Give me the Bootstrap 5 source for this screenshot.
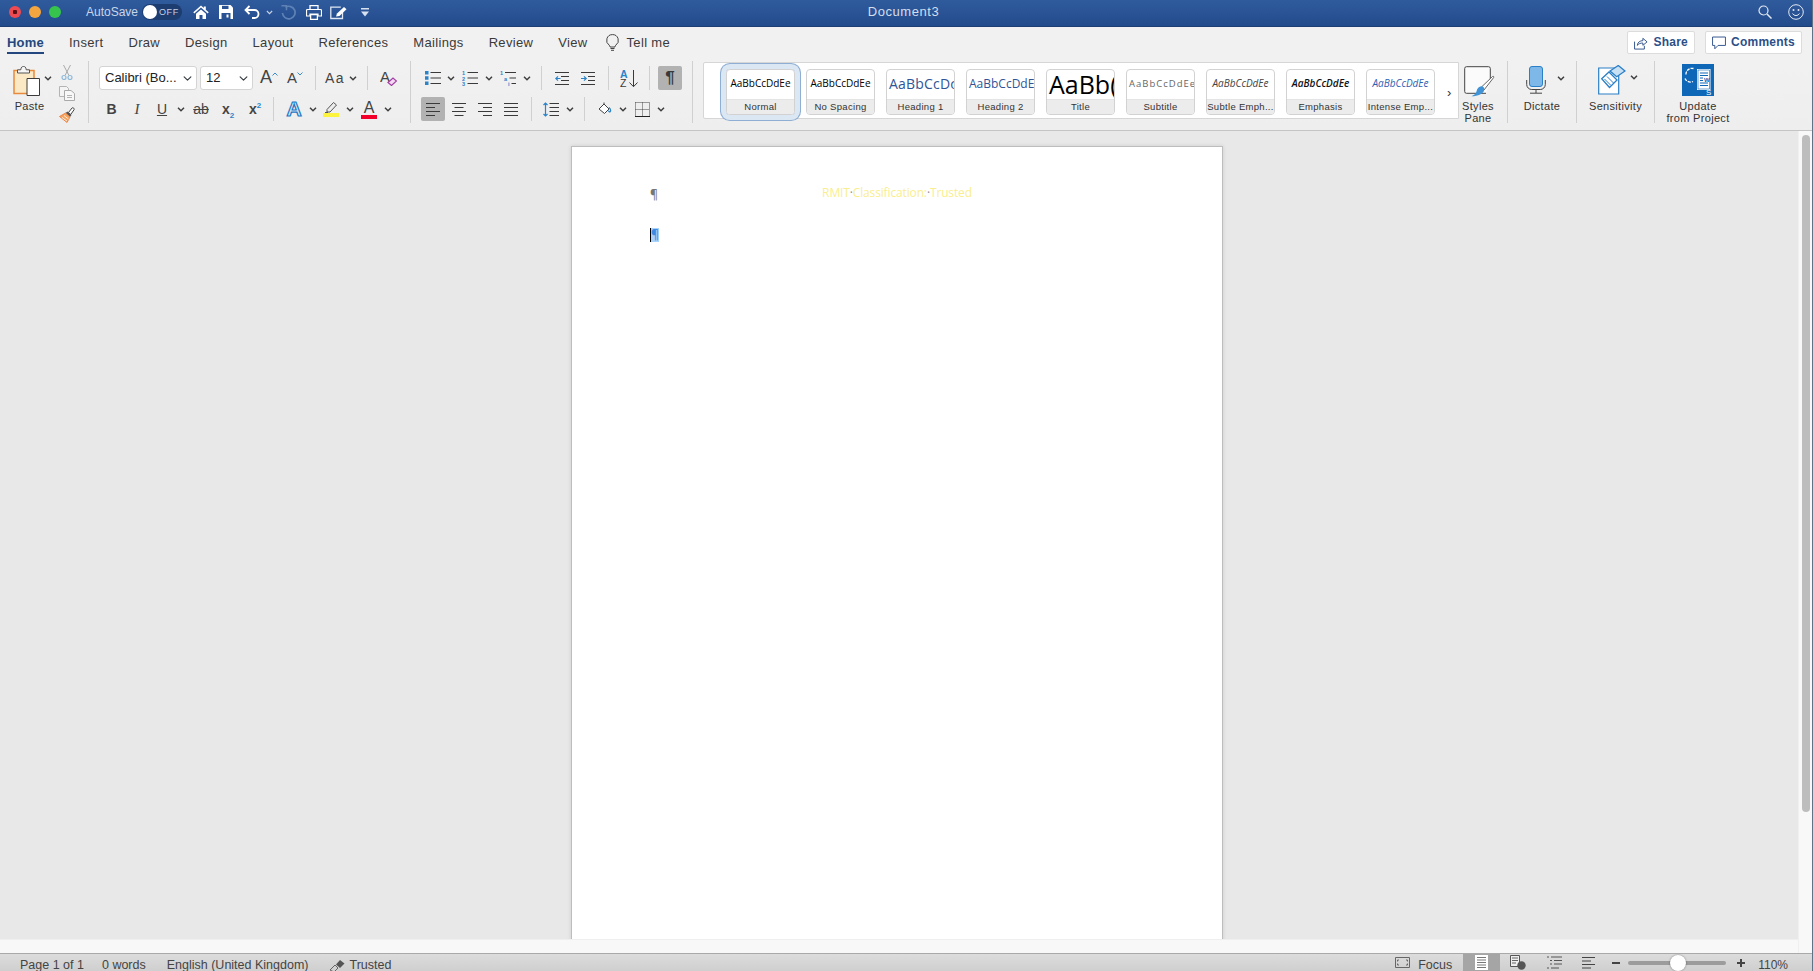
<!DOCTYPE html>
<html lang="en">
<head>
<meta charset="UTF-8">
<meta name="viewport" content="width=device-width, initial-scale=1.0">
<title>Document3</title>
<link href="https://cdn.jsdelivr.net/npm/bootstrap@5.3.0/dist/css/bootstrap.min.css" rel="stylesheet">
<style>
html, body { height: 100%; }
body { width: 1813px; height: 971px; overflow: hidden; background: #f1f1f1; color: #333; font-family: "Liberation Sans", Arial, sans-serif; font-size: 13px; display: flex; flex-direction: column; border-right: 1px solid #5d7386; }
svg { display: block; flex: none; }

.cell { display: flex; align-items: center; justify-content: center; flex: none; height: 24px; }
.c7 { width: 7px; } .c8 { width: 8px; } .c10 { width: 10px; } .c12 { width: 12px; } .c14 { width: 14px; }
.c16 { width: 16px; } .c18 { width: 18px; } .c22 { width: 22px; } .c23 { width: 23px; } .c24 { width: 24px; }
.c26 { width: 26px; } .c28 { width: 28px; } .c30 { width: 30px; } .c32 { width: 32px; }
.vsep { width: 1px; height: 24px; background: #d0d0d0; }

/* title bar */
.titlebar { height: 27px; flex: none; background: linear-gradient(#2f5b9d, #234b8c); border-bottom: 1px solid #1d3e75; color: #d5deec; padding: 0 0 2px 9px; }
.light { width: 12px; height: 12px; border-radius: 50%; margin-right: 8px; flex: none; }
.light-red { background: radial-gradient(circle, #5a1015 0 2px, #ee4a52 2.5px); }
.light-orange { background: #f6a63e; }
.light-green { background: #36c44d; margin-right: 0; }
.autosave { width: 56px; margin-left: 25px; font-size: 12px; color: #c9d5e8; }
.toggle { width: 40px; height: 16px; border-radius: 8px; background: #1d3c70; color: #c6d2e6; font-size: 9px; letter-spacing: .6px; padding: 0 0 0 17px; line-height: 16px; margin-right: 7px; position: relative; flex: none; }
.toggle::before { content: ""; position: absolute; left: 1px; top: 1px; width: 14px; height: 14px; background: #fff; border-radius: 50%; }
.doctitle { position: absolute; left: 0; right: 5px; top: 0; line-height: 24px; text-align: center; letter-spacing: .55px; color: #d5deec; pointer-events: none; }

/* tabs */
.tabrow { height: 34px; flex: none; background: #f1f1f1; padding-left: 7px; padding-right: 10px; }
.tabrow .nav-link { color: #3a3a3a; padding: 8px 0 1px; margin-right: 25px; font-size: 13px; letter-spacing: .33px; line-height: 16px; border-bottom: 2.5px solid transparent; }
.tabrow .nav-link.active { font-weight: 700; color: #24477f; border-bottom-color: #24477f; letter-spacing: .2px; }
.tellme { margin-left: -7px; }
.tellme .nav-link { padding-top: 7px; padding-bottom: 1px; }
.tb-btns { gap: 10px; padding-top: 4px; }
.tb-btn.btn { height: 23px; padding: 0 6px; font-size: 12px; line-height: 21px; font-weight: 700; letter-spacing: .25px; color: #2c4f88; background: #fff; border: 1px solid #dcdcdc; border-radius: 2px; display: flex; align-items: center; gap: 5px; }

/* ribbon */
.ribbon { height: 70px; flex: none; border-bottom: 1px solid #c4c4c4; background: linear-gradient(#f1f1f1, #eeeeee); }
.rgroup { height: 62px; flex: none; border-right: 1px solid #d0d0d0; }
.rlabel { font-size: 11px; line-height: 12px; letter-spacing: .32px; color: #333; text-align: center; white-space: nowrap; }
.rrow { display: flex; align-items: center; height: 24px; }
.rrow + .rrow { margin-top: 7px; }
.rrows { padding-top: 5px; }
.grp-paste { width: 89px; display: flex; }
.paste-col { width: 59px; }
.paste-top { height: 39px; display: flex; align-items: flex-start; padding: 5px 0 0 13px; }
.paste-tools { display: flex; flex-direction: column; padding-top: 4px; }
.paste-tools svg + svg { margin-top: 6px; }
.grp-font { width: 322px; }
.grp-para { width: 282px; }
.pad-font1 { padding-left: 10px; }
.pad-font2 { padding-left: 11px; }
.pad-para { padding-left: 10px; }
.fsel.form-select { height: 24px; font-size: 13px; padding: 0 16px 0 5px; line-height: 22px; border: 1px solid #d4d4d4; border-radius: 3px; color: #222; background-position: right 3px center; background-size: 11px 9px; box-shadow: none; flex: none; }
.fsel-name { width: 98px; margin-right: 3px; }
.fsel-size { width: 53px; margin-right: 3px; }
.gly { color: #444; line-height: 1.2; }
.gly-a { font-size: 18px; font-weight: 400; }
.gly-a2 { font-size: 15px; }
.gly-aa { font-size: 14px; letter-spacing: 1.5px; }
.gly-b { font-size: 14px; font-weight: 700; }
.gly-i { font-size: 15px; font-style: italic; font-family: "Liberation Serif", serif; }
.gly-u { font-size: 14px; text-decoration: underline; }
.gly-s { font-size: 14px; text-decoration: line-through; }
.gly-x { font-size: 14px; font-weight: 700; }
.gly-x small { font-size: 8px; color: #2e86c9; font-weight: 700; }
.sub2 { position: relative; top: 4px; }
.sup2 { position: relative; top: -6px; }
.gly-fx { font-size: 21px; font-weight: 700; color: #d9ecfb; -webkit-text-stroke: 1.2px #1f78c4; }
.colorpick { display: flex; flex-direction: column; align-items: center; width: 16px; }
.colorpick span { font-size: 16px; line-height: 15px; color: #444; }
.colorbar { width: 16px; height: 4px; }
.bar-red { background: #f3002a; }
.bar-yellow { background: #fbf33d; }
.onbtn { width: 24px; height: 24px; border-radius: 2px; background: #b2b2b2; display: flex; align-items: center; justify-content: center; font-size: 17px; font-weight: 700; color: #3a3a3a; }

.gallery { width: 756px; height: 57px; margin: 1px 0 0 10px; background: #fff; border: 1px solid #d6d6d6; border-radius: 2px 0 0 2px; padding: 6px 0 0 22px; gap: 11px; flex: none; }
.stylecard.card { width: 69px; height: 46px; flex: none; border: 1px solid #d2d2d2; border-radius: 4px; overflow: hidden; background: linear-gradient(#fff 60%, #f8f8f8); --bs-card-bg: transparent; }
.stylecard.picked { box-shadow: 0 0 0 5px #dce7f4, 0 0 0 6px #8eaed4; }
.prev { height: 29px; line-height: 27px; text-align: center; white-space: nowrap; overflow: hidden; font-family: "Open Sans", sans-serif; font-size: 10px; color: #000; padding: 0 3px; }
.capt { height: 15px; line-height: 14px; font-size: 9.5px; letter-spacing: .3px; text-align: center; background: #ececec; border-top: 1px solid #e4e4e4; color: #333; white-space: nowrap; }
.p-h1 { font-size: 14px; color: #2f5597; text-align: left; letter-spacing: .2px; padding-left: 2px; }
.p-h2 { font-size: 12px; color: #2f5597; text-align: left; padding-left: 2px; }
.p-title { font-size: 25px; color: #000; text-align: left; padding-left: 2px; line-height: 29px; }
.p-sub { font-size: 9.5px; color: #666; letter-spacing: 1px; text-align: left; padding-left: 2px; }
.p-se { font-style: italic; color: #444; }
.p-em { font-style: italic; color: #111; font-weight: 600; }
.p-ie { font-style: italic; color: #2f5fb3; }
.gal-more { width: 10px; padding-top: 14px; padding-left: 1px; font-size: 13px; color: #333; flex: none; line-height: 20px; }

.bigtool { flex: none; }
.big-top { height: 39px; display: flex; align-items: flex-start; padding-top: 4px; }
.grp-styles { width: 49px; padding-right: 10px; }
.grp-styles .big-top { padding-left: 5px; padding-top: 5px; }
.grp-dict { width: 69px; }
.grp-dict .big-top { padding-left: 18px; padding-top: 5px; }
.grp-sens { width: 78px; }
.grp-sens .big-top { padding-left: 21px; padding-top: 4px; }
.grp-upd { width: 86px; border-right: 0; }
.grp-upd .big-top { justify-content: center; padding-top: 3px; }
.big-chev { margin-top: 10px; }
.grp-dict .big-chev { margin-left: 11px; }
.grp-sens .big-chev { margin-left: 4px; }

/* document */
.docrow { flex: 1 1 auto; min-height: 0; display: flex; }
.docleft { width: 1798px; display: flex; flex-direction: column; flex: none; }
.docarea { flex: 1 1 auto; min-height: 0; background: #e8e8e8; overflow: hidden; padding: 15px 0 0 571px; }
.htrack { height: 14px; flex: none; background: #f8f8f8; border-top: 1px solid #efefef; }
.vtrack { width: 14px; flex: none; background: #f8f8f8; padding: 4px 0 0 3px; border-left: 1px solid #f0f0f0; }
.vthumb { width: 8px; height: 677px; background: #bdbdbd; border-radius: 4px; }
.sheet { width: 652px; height: 900px; background: #fff; border: 1px solid #bdbdbd; box-shadow: 0 0 4px rgba(0,0,0,.12); padding: 38px 78px 0; }
.sheet-line { display: grid; grid-template-columns: 1fr auto 1fr; height: 16px; line-height: 16px; }
.sheet-line + .sheet-line { margin-top: 26px; }
.pil { font-family: "Open Sans", sans-serif; font-size: 12px; color: #777; font-weight: 600; justify-self: start; padding-top: 2px; }
.pil-sel { background: #a9d3fb; color: #3c8be0; height: 14px; line-height: 14px; padding-top: 0; margin-top: 1px; border-left: 1px solid #000; }
.hdrtext { font-family: "Open Sans", sans-serif; font-size: 12px; color: #f9ee8f; white-space: nowrap; letter-spacing: -.14px; }
.hdrtext i { font-style: normal; color: #8f8f8f; }

/* status bar */
.statusbar { height: 18px; flex: none; background: linear-gradient(#dcdcdc, #cfcfcf); border-top: 1px solid #a9a9a9; color: #444; font-size: 12.5px; line-height: 22px; overflow: hidden; padding-left: 20px; }
.statusbar span { white-space: nowrap; }
.st-g18 { margin-left: 18px; }
.st-g21 { margin-left: 21px; }
.st-shield { margin-right: 3px; margin-top: 4px; }
.st-cell { height: 17px; display: flex; align-items: center; justify-content: center; flex: none; }
.st-on { width: 37px; background: #a5a5a5; margin-left: 11px; }
.w36 { width: 36px; } .w32 { width: 32px; } .w24 { width: 24px; } .w29 { width: 29px; }
.st-zoom { font-size: 12px; margin-left: 3px; }
.zoomtrack { width: 98px; height: 4px; background: #9c9c9c; border-radius: 2px; position: relative; flex: none; }
.zoomknob { position: absolute; left: 42px; top: -6px; width: 16px; height: 16px; background: #fff; border-radius: 50%; box-shadow: 0 0 2px rgba(0,0,0,.45); }
</style>
</head>
<body>

<svg width="0" height="0" class="position-absolute">
  <symbol id="chev" viewBox="0 0 8 5"><path d="M1 .8 4 3.800 7 .8" fill="none" stroke="#3f3f3f" stroke-width="1.500"/></symbol>
  <symbol id="al-left" viewBox="0 0 14 14"><path d="M0 1.500h14M0 5.500h9M0 9.500h14M0 13.500h9" stroke="#3a3a3a" fill="none"/></symbol>
  <symbol id="al-center" viewBox="0 0 14 14"><path d="M0 1.500h14M2.500 5.500h9M0 9.500h14M2.500 13.500h9" stroke="#3a3a3a" fill="none"/></symbol>
  <symbol id="al-right" viewBox="0 0 14 14"><path d="M0 1.500h14M5 5.500h9M0 9.500h14M5 13.500h9" stroke="#3a3a3a" fill="none"/></symbol>
  <symbol id="al-just" viewBox="0 0 14 14"><path d="M0 1.500h14M0 5.500h14M0 9.500h14M0 13.500h14" stroke="#3a3a3a" fill="none"/></symbol>
</svg>

<header class="titlebar d-flex align-items-center position-relative">
  <div class="doctitle">Document3</div>
  <span class="light light-red"></span><span class="light light-orange"></span><span class="light light-green"></span>
  <span class="autosave">AutoSave</span>
  <span class="toggle">OFF</span>
  <span class="cell c24"><svg width="16" height="14" viewBox="0 0 16 14"><path d="M8 .5 .3 7.300l1 1.100L8 2.600l6.700 5.800 1-1.100L12.800 4.800V1.500h-2v1.600z" fill="#fff"/><path d="M3 8.800 8 4.400l5 4.400V14H9.500V10h-3v4H3z" fill="#fff"/></svg></span>
  <span class="cell c26"><svg width="14" height="14" viewBox="0 0 14 14"><path d="M0 0h11.500L14 2.500V14H0z" fill="#fff"/><path d="M3 .8h6.500v3.200H3z" fill="#2a5292"/><path d="M2.500 8h9v6h-9z" fill="#2a5292"/><path d="M7.500 9.500h2v3h-2z" fill="#fff"/></svg></span>
  <span class="cell c26"><svg width="16" height="14" viewBox="0 0 16 14"><path d="M5.500 1 1.500 5 5.500 9M2 5h8.500a4 4 0 0 1 0 8H8" fill="none" stroke="#fff" stroke-width="1.800"/></svg></span>
  <span class="cell c8"><svg width="7" height="5" viewBox="0 0 8 5"><path d="M1 .8 4 3.800 7 .8" fill="none" stroke="#c6d2e6" stroke-width="1.300"/></svg></span>
  <span class="cell c30"><svg width="16" height="15" viewBox="0 0 16 15"><path d="M5.500 2.200A6.300 6.300 0 1 1 2.500 8" fill="none" stroke="#5f82b5" stroke-width="1.700"/><path d="M1.500 .8h5v4.500" fill="none" stroke="#5f82b5" stroke-width="1.500"/></svg></span>
  <span class="cell c22"><svg width="16" height="15" viewBox="0 0 16 15"><path d="M4 5V.7h8V5" fill="none" stroke="#fff" stroke-width="1.300"/><path d="M1.500 4.500h13a1 1 0 0 1 1 1V11H12V9H4v2H.5V5.500a1 1 0 0 1 1-1z" fill="none" stroke="#fff" stroke-width="1.200"/><path d="M4.600 9.700h6.800v4.600H4.600z" fill="none" stroke="#fff" stroke-width="1.300"/></svg></span>
  <span class="cell c28"><svg width="18" height="15" viewBox="0 0 18 15"><path d="M12.500 6v7.500H.8V2.200h10" fill="none" stroke="#dfe7f2" stroke-width="1.300"/><path d="M4 9.500 5 6.500 12 0l2.500 2.300L7.500 9z" fill="#fff" transform="translate(2 2)"/></svg></span>
  <span class="cell c24"><svg width="8" height="9" viewBox="0 0 8 9"><path d="M0 0h8v1.500H0zM0 3.500h8L4 8.500z" fill="#d8e1ef"/></svg></span>
  <div class="ms-auto d-flex align-items-center gap-3 pe-2">
    <svg width="14" height="14" viewBox="0 0 14 14"><circle cx="5.500" cy="5.500" r="4.500" fill="none" stroke="#e3e9f3" stroke-width="1.200"/><path d="M9 9l4.500 4.500" stroke="#e3e9f3" stroke-width="1.500"/></svg>
    <svg width="16" height="16" viewBox="0 0 16 16"><circle cx="8" cy="8" r="7.300" fill="none" stroke="#e3e9f3"/><circle cx="5.500" cy="6" r="1" fill="#e3e9f3"/><circle cx="10.500" cy="6" r="1" fill="#e3e9f3"/><path d="M4.500 9.500a4 4 0 0 0 7 0" fill="none" stroke="#e3e9f3"/></svg>
  </div>
</header>

<div class="tabrow d-flex align-items-start">
  <ul class="nav flex-nowrap">
    <li class="nav-item"><a class="nav-link active" href="#">Home</a></li>
    <li class="nav-item"><a class="nav-link" href="#">Insert</a></li>
    <li class="nav-item"><a class="nav-link" href="#">Draw</a></li>
    <li class="nav-item"><a class="nav-link" href="#">Design</a></li>
    <li class="nav-item"><a class="nav-link" href="#">Layout</a></li>
    <li class="nav-item"><a class="nav-link" href="#">References</a></li>
    <li class="nav-item"><a class="nav-link" href="#">Mailings</a></li>
    <li class="nav-item"><a class="nav-link" href="#">Review</a></li>
    <li class="nav-item"><a class="nav-link" href="#">View</a></li>
    <li class="nav-item tellme">
      <a class="nav-link d-flex align-items-center gap-2" href="#">
        <svg width="13" height="17" viewBox="0 0 13 17"><path d="M6.500.6a5.800 5.800 0 0 0-3.300 10.600c.7.600.8 1.200.8 1.800h5c0-.6.100-1.200.8-1.800A5.800 5.800 0 0 0 6.500.6z" fill="none" stroke="#444"/><path d="M4.500 14.500h4M5 16.300h3" stroke="#444"/></svg>
        Tell me</a>
    </li>
  </ul>
  <div class="ms-auto d-flex tb-btns">
    <button class="btn tb-btn" type="button"><svg width="14" height="14" viewBox="0 0 15 14"><path d="M.6 5.500v8h10.500V10" fill="none" stroke="#2c4f88"/><path d="M3.500 9.500c.5-3.500 3-5 6-5V2l4.500 3.800-4.500 3.700V7C7 7 5 7.800 3.500 9.500z" fill="none" stroke="#2c4f88"/></svg>Share</button>
    <button class="btn tb-btn" type="button"><svg width="14" height="14" viewBox="0 0 15 14"><path d="M.6.600h13.800v9H6.500L3 13.200V9.600H.6z" fill="none" stroke="#2c4f88"/></svg>Comments</button>
  </div>
</div>

<div class="ribbon d-flex">
  <!-- clipboard -->
  <div class="rgroup grp-paste">
    <div class="paste-col">
      <div class="paste-top">
        <svg width="27" height="30" viewBox="0 0 27 30"><path d="M1 4.500h20v23H1z" fill="#fbe9c6" stroke="#e78a3c" stroke-width="1.500"/><path d="M4.500 7V3.800h3.300C8 1 9.200.5 10.500.5S13 1 13.200 3.800h3.300V7z" fill="#f6f6f6" stroke="#555"/><path d="M14 12.500h12.500v17H14z" fill="#fff" stroke="#3c3c3c"/></svg>
        <svg width="8" height="5" class="ms-1 big-chev"><use href="#chev"/></svg>
      </div>
      <div class="rlabel">Paste</div>
    </div>
    <div class="paste-tools">
      <svg width="16" height="15" viewBox="0 0 16 15"><path d="M4.500 0 10 10.500M11.500 0 6 10.500" stroke="#a9a9a9" fill="none"/><circle cx="5" cy="12.500" r="2" fill="none" stroke="#8db9da" stroke-width="1.200"/><circle cx="11" cy="12.500" r="2" fill="none" stroke="#8db9da" stroke-width="1.200"/></svg>
      <svg width="16" height="15" viewBox="0 0 16 15"><path d="M.5.500h7l2 2v8H.5z" fill="#f4f4f4" stroke="#b4b4b4"/><path d="M5.500 4.500h6.500l3.500 3v7h-10z" fill="#f8f8f8" stroke="#aaa"/><path d="M8 9.500h5M8 11.500h5" stroke="#b4b4b4"/></svg>
      <svg width="16" height="16" viewBox="0 0 16 16"><path d="M9.500 5.500 13 1c.8-.9 2.800.5 2 1.800l-3.300 4.700z" fill="#fff" stroke="#444"/><path d="M8.500 4.500 12.500 8 11 10 6.500 6z" fill="#555"/><path d="M6.500 6 11 10l-3 5.500L.5 9.500z" fill="#f6a35c" stroke="#e9773a" stroke-width=".8"/><path d="M3 10.500l5 3.500M5 8.500l4.500 3.500" stroke="#fff" stroke-width=".8"/></svg>
    </div>
  </div>

  <!-- font -->
  <div class="rgroup grp-font rrows">
    <div class="rrow pad-font1">
      <select class="form-select fsel fsel-name"><option>Calibri (Bo...</option></select>
      <select class="form-select fsel fsel-size"><option>12</option></select>
      <span class="cell c26"><span class="gly gly-a">A</span><svg width="6" height="4" viewBox="0 0 6 4" class="mb-2"><path d="M.5 3.500 3 1l2.500 2.500" fill="none" stroke="#3a8ccb"/></svg></span>
      <span class="cell c26"><span class="gly gly-a2">A</span><svg width="6" height="4" viewBox="0 0 6 4" class="mb-2"><path d="M.5.500 3 3 5.500.5" fill="none" stroke="#3a8ccb"/></svg></span>
      <span class="cell c14"><span class="vsep"></span></span>
      <span class="cell c26"><span class="gly gly-aa">Aa</span></span>
      <span class="cell c10"><svg width="8" height="5"><use href="#chev"/></svg></span>
      <span class="cell c18"><span class="vsep"></span></span>
      <span class="cell c24"><svg width="17" height="16" viewBox="0 0 17 16"><text x="0" y="12" font-size="15" font-family="Liberation Sans" fill="#444">A</text><path d="M8 12.500 13 8l3.500 3-5 4.500z" fill="#f4d9f2" stroke="#a23ea5" stroke-width="1.200"/></svg></span>
    </div>
    <div class="rrow pad-font2">
      <span class="cell c23"><span class="gly gly-b">B</span></span>
      <span class="cell c28"><span class="gly gly-i">I</span></span>
      <span class="cell c22"><span class="gly gly-u">U</span></span>
      <span class="cell c16"><svg width="8" height="5"><use href="#chev"/></svg></span>
      <span class="cell c24"><span class="gly gly-s">ab</span></span>
      <span class="cell c30"><span class="gly gly-x">x<small class="sub2">2</small></span></span>
      <span class="cell c24"><span class="gly gly-x">x<small class="sup2">2</small></span></span>
      <span class="cell c12"><span class="vsep"></span></span>
      <span class="cell c30"><span class="gly gly-fx">A</span></span>
      <span class="cell c7"><svg width="8" height="5"><use href="#chev"/></svg></span>
      <span class="cell c30"><span class="colorpick"><svg width="14" height="12" viewBox="0 0 14 12"><path d="M3 8.500 9.500 1.500l3 2.500-6.500 7H3z" fill="#ededed" stroke="#555"/><path d="M1 11.500h3" stroke="#555"/></svg><span class="colorbar bar-yellow"></span></span></span>
      <span class="cell c8"><svg width="8" height="5"><use href="#chev"/></svg></span>
      <span class="cell c30"><span class="colorpick"><span>A</span><span class="colorbar bar-red"></span></span></span>
      <span class="cell c8"><svg width="8" height="5"><use href="#chev"/></svg></span>
    </div>
  </div>

  <!-- paragraph -->
  <div class="rgroup grp-para rrows">
    <div class="rrow pad-para">
      <span class="cell c24"><svg width="16" height="14" viewBox="0 0 16 14"><path d="M0 0h3.500v3.500H0zM0 5.300h3.500v3.500H0zM0 10.500h3.500V14H0z" fill="#2b83c8"/><path d="M5.500 1.500H16M5.500 7H16M5.500 12.500H16" stroke="#3a3a3a"/></svg></span>
      <span class="cell c12"><svg width="8" height="5"><use href="#chev"/></svg></span>
      <span class="cell c26"><svg width="16" height="16" viewBox="0 0 16 16"><text x="0" y="5" font-size="5.500" font-weight="700" font-family="Liberation Sans" fill="#2b83c8">1</text><text x="0" y="10.500" font-size="5.500" font-weight="700" font-family="Liberation Sans" fill="#2b83c8">2</text><text x="0" y="16" font-size="5.500" font-weight="700" font-family="Liberation Sans" fill="#2b83c8">3</text><path d="M5.500 2.500H16M5.500 8H16M5.500 13.500H16" stroke="#3a3a3a"/></svg></span>
      <span class="cell c12"><svg width="8" height="5"><use href="#chev"/></svg></span>
      <span class="cell c26"><svg width="16" height="16" viewBox="0 0 16 16"><text x="0" y="5" font-size="5.500" font-weight="700" font-family="Liberation Sans" fill="#2b83c8">1</text><text x="4" y="10.500" font-size="5.500" font-weight="700" font-family="Liberation Sans" fill="#2b83c8">a</text><text x="8" y="16" font-size="5.500" font-weight="700" font-family="Liberation Sans" fill="#2b83c8">i</text><path d="M5 2.500H16M9.500 8H16M11.500 13.500H16" stroke="#3a3a3a"/></svg></span>
      <span class="cell c12"><svg width="8" height="5"><use href="#chev"/></svg></span>
      <span class="cell c16"><span class="vsep"></span></span>
      <span class="cell c26"><svg width="14" height="13" viewBox="0 0 14 13"><path d="M0 .5h14M6 4.500h8M6 8.500h8M0 12.500h14" stroke="#3a3a3a"/><path d="M5.500 6.500H.8M3 4.300.8 6.500 3 8.700" fill="none" stroke="#2b83c8" stroke-width="1.200"/></svg></span>
      <span class="cell c26"><svg width="14" height="13" viewBox="0 0 14 13"><path d="M0 .5h14M7 4.500h7M7 8.500h7M0 12.500h14" stroke="#3a3a3a"/><path d="M0 6.500h5M3 4.300l2.200 2.200L3 8.700" fill="none" stroke="#2b83c8" stroke-width="1.200"/></svg></span>
      <span class="cell c14"><span class="vsep"></span></span>
      <span class="cell c28"><svg width="18" height="19" viewBox="0 0 18 19"><text x="0" y="8.500" font-size="10.500" font-weight="700" font-family="Liberation Sans" fill="#2b83c8">A</text><text x="0" y="18" font-size="10.500" font-family="Liberation Sans" fill="#3a3a3a">Z</text><path d="M13.500 1v16.500M9.500 13.500l4 4.200 4-4.200" fill="none" stroke="#3a3a3a"/></svg></span>
      <span class="cell c12"><span class="vsep"></span></span>
      <span class="cell c30"><span class="onbtn">¶</span></span>
    </div>
    <div class="rrow pad-para">
      <span class="cell c24"><span class="onbtn"><svg width="14" height="14"><use href="#al-left"/></svg></span></span>
      <span class="cell c28"><svg width="14" height="14"><use href="#al-center"/></svg></span>
      <span class="cell c24"><svg width="14" height="14"><use href="#al-right"/></svg></span>
      <span class="cell c28"><svg width="14" height="14"><use href="#al-just"/></svg></span>
      <span class="cell c12"><span class="vsep"></span></span>
      <span class="cell c28"><svg width="16" height="15" viewBox="0 0 16 15"><path d="M6.500 1.500H16M6.500 5.500H16M6.500 9.500H16M6.500 13.500H16" stroke="#3a3a3a"/><path d="M2.500 1v13M.5 3l2-2 2 2M.5 12l2 2 2-2" fill="none" stroke="#2b83c8" stroke-width="1.200"/></svg></span>
      <span class="cell c10"><svg width="8" height="5"><use href="#chev"/></svg></span>
      <span class="cell c18"><span class="vsep"></span></span>
      <span class="cell c24"><svg width="14" height="14" viewBox="0 0 14 14"><path d="M1 7 6 2l5 5-4.500 4.500z" fill="#fff" stroke="#444"/><path d="M6 2V.5" stroke="#444"/><path d="M11 5.500c1.500 1.500 2 3 1.300 4-.6.700-1.800.3-1.500-1" fill="none" stroke="#2b83c8" stroke-width="1.200"/></svg></span>
      <span class="cell c12"><svg width="8" height="5"><use href="#chev"/></svg></span>
      <span class="cell c26"><svg width="15" height="15" viewBox="0 0 15 15"><path d="M.5.500h14M.5 7.500h14M7.500.5v14M.5.500v14M14.500.5v14" fill="none" stroke="#444" stroke-dasharray="1 1"/><path d="M0 14.500h15" stroke="#222"/></svg></span>
      <span class="cell c12"><svg width="8" height="5"><use href="#chev"/></svg></span>
    </div>
  </div>

  <!-- styles gallery -->
  <div class="gallery d-flex">
    <div class="card stylecard picked"><div class="prev">AaBbCcDdEe</div><div class="capt">Normal</div></div>
    <div class="card stylecard"><div class="prev">AaBbCcDdEe</div><div class="capt">No Spacing</div></div>
    <div class="card stylecard"><div class="prev p-h1">AaBbCcDc</div><div class="capt">Heading 1</div></div>
    <div class="card stylecard"><div class="prev p-h2">AaBbCcDdEe</div><div class="capt">Heading 2</div></div>
    <div class="card stylecard"><div class="prev p-title">AaBb(</div><div class="capt">Title</div></div>
    <div class="card stylecard"><div class="prev p-sub">AaBbCcDdEe</div><div class="capt">Subtitle</div></div>
    <div class="card stylecard"><div class="prev p-se">AaBbCcDdEe</div><div class="capt">Subtle Emph...</div></div>
    <div class="card stylecard"><div class="prev p-em">AaBbCcDdEe</div><div class="capt">Emphasis</div></div>
    <div class="card stylecard"><div class="prev p-ie">AaBbCcDdEe</div><div class="capt">Intense Emp...</div></div>
    <div class="gal-more">›</div>
  </div>

  <div class="rgroup grp-styles bigtool">
    <div class="big-top"><svg width="31" height="31" viewBox="0 0 31 31"><path d="M22 27.300H2.500a1.800 1.800 0 0 1-1.800-1.800V2.500A1.800 1.800 0 0 1 2.500.7h22a1.800 1.800 0 0 1 1.800 1.800V15" fill="#fbfbfb" stroke="#444"/><path d="M17.500 21 28.500 10.500c.8-.7 1.800.3 1.100 1.100L20 24z" fill="#fff" stroke="#666"/><path d="M16.500 20.500c2-.7 4.200 1 3.800 3.300-.7 4-6.300 6.500-12.800 6.500 3.500-1.500 4.600-3 5.200-5.500.4-2 2-3.800 3.800-4.300z" fill="#3f93d6"/></svg></div>
    <div class="rlabel">Styles<br>Pane</div>
  </div>
  <div class="rgroup grp-dict bigtool">
    <div class="big-top"><svg width="20" height="28" viewBox="0 0 20 28"><rect x="3.500" y=".5" width="13" height="20" rx="2.500" fill="#7db8e8" stroke="#2a7fc6"/><path d="M.7 14v4.500a5 5 0 0 0 5 5h8.600a5 5 0 0 0 5-5V14M10 23.500V27M4 27.200h12" fill="none" stroke="#444"/></svg><svg width="8" height="5" class="big-chev"><use href="#chev"/></svg></div>
    <div class="rlabel">Dictate</div>
  </div>
  <div class="rgroup grp-sens bigtool">
    <div class="big-top"><svg width="28" height="30" viewBox="0 0 28 30"><path d="M.7 3h20v26H.7z" fill="#fff" stroke="#2a7fc6" stroke-width="1.200"/><path d="M3.700 13.700 11 7l8 8-7.500 7.500z" fill="#fff" stroke="#2a7fc6" stroke-width="1.300"/><path d="M6.500 14l6.500 6.500M9 11.500l6.500 6.500" stroke="#2a7fc6"/><path d="M12 6l8.300-5.500L27 6l-8.300 5.700z" fill="#c7e0f4" stroke="#2a7fc6" stroke-width="1.300"/></svg><svg width="8" height="5" class="big-chev"><use href="#chev"/></svg></div>
    <div class="rlabel">Sensitivity</div>
  </div>
  <div class="rgroup grp-upd bigtool">
    <div class="big-top"><svg width="32" height="32" viewBox="0 0 32 32"><path d="M0 0h32v32H0z" fill="#0f67b7"/><path d="M15 5h13.500v21H15z" fill="#fff"/><path d="M16 6h11.500v19H16z" fill="none" stroke="#0f67b7" stroke-width=".6"/><path d="M18 9h8M18 11.500h8M18 14h3M18 16.500h3M18 19h8M18 21.500h8" stroke="#0f67b7"/><text x="22" y="18" font-size="6" font-weight="700" font-family="Liberation Sans" fill="#0f67b7">W</text><path d="M11.500 4.500A6 6 0 0 0 4 11M3 14.500A6 6 0 0 0 11 17.500" fill="none" stroke="#fff" stroke-width="1.300" stroke-dasharray="3 1"/><text x="24" y="31" font-size="8" font-family="Liberation Sans" fill="#fff">S</text></svg></div>
    <div class="rlabel">Update<br>from Project</div>
  </div>
</div>

<main class="docrow">
  <div class="docleft">
    <div class="docarea">
      <div class="sheet">
        <div class="sheet-line"><span class="pil">¶</span><span class="hdrtext">RMIT<i>·</i>Classification:<i>·</i>Trusted</span><span></span></div>
        <div class="sheet-line"><span class="pil pil-sel">¶</span><span></span><span></span></div>
      </div>
    </div>
    <div class="htrack"></div>
  </div>
  <div class="vtrack"><div class="vthumb"></div></div>
</main>

<footer class="statusbar d-flex">
  <span>Page 1 of 1</span>
  <span class="st-g18">0 words</span>
  <span class="st-g21">English (United Kingdom)</span>
  <span class="st-g21 d-flex align-items-start"><svg width="17" height="14" viewBox="0 0 17 14" class="st-shield"><path d="M1 12 6 7l3 3-4 4z" fill="none" stroke="#666"/><path d="M7 6.500 11 2l4.500 3.500-4.500 4.500z" fill="#555"/></svg>Trusted</span>
  <div class="ms-auto d-flex align-items-start pe-4">
    <span class="st-cell"><svg width="15" height="11" viewBox="0 0 15 11"><path d="M.5.500h14v10H.5z" fill="none" stroke="#666"/><path d="M4 3H2.500v1.500M11 3h1.500v1.500M4 8H2.500V6.500M11 8h1.500V6.500" fill="none" stroke="#666"/></svg></span>
    <span class="ms-2">Focus</span>
    <span class="st-cell st-on"><svg width="13" height="15" viewBox="0 0 13 15"><path d="M0 0h13v15H0z" fill="#fff"/><path d="M2 2.500h9M2 5h9M2 7.500h9M2 10h9M2 12.500h9" stroke="#777"/></svg></span>
    <span class="st-cell w36"><svg width="16" height="15" viewBox="0 0 16 15"><path d="M.5.500h9v11H.5z" fill="#eee" stroke="#555"/><path d="M2 3h6M2 5.500h6M2 8h4" stroke="#666"/><circle cx="11.500" cy="10.500" r="4.200" fill="#555"/></svg></span>
    <span class="st-cell w36"><svg width="15" height="13" viewBox="0 0 15 13"><path d="M0 1h2M4 1h11M3 4.500h2M7 4.500h8M3 8h2M7 8h8M0 12h2M4 12h8" stroke="#555"/></svg></span>
    <span class="st-cell w32"><svg width="13" height="12" viewBox="0 0 13 12"><path d="M0 .5h13M0 4h9M0 7.500h13M0 11h9" stroke="#444"/></svg></span>
    <span class="st-cell w24"><svg width="8" height="2" viewBox="0 0 8 2"><path d="M0 0h8v2H0z" fill="#444"/></svg></span>
    <span class="st-cell"><span class="zoomtrack"><span class="zoomknob"></span></span></span>
    <span class="st-cell w29"><svg width="8" height="8" viewBox="0 0 8 8"><path d="M3 0h2v3h3v2H5v3H3V5H0V3h3z" fill="#444"/></svg></span>
    <span class="st-zoom">110%</span>
  </div>
</footer>

</body>
</html>
